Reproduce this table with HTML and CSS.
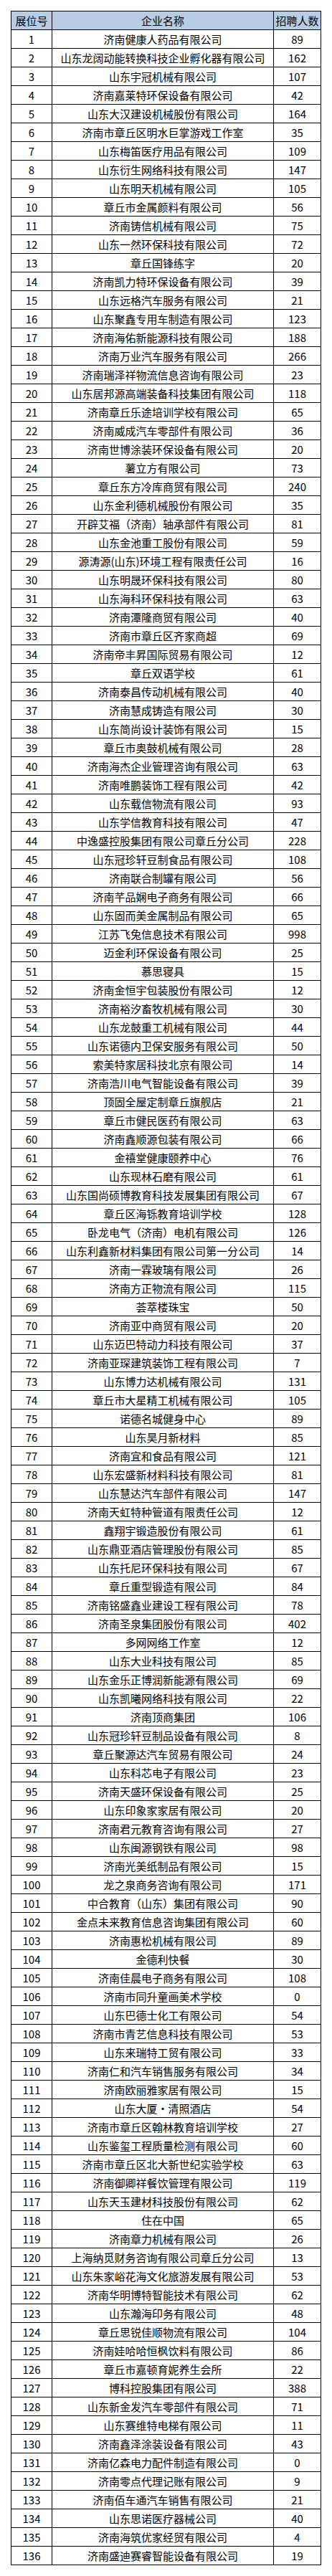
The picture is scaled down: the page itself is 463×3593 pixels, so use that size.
FILE: index.html
```html
<!DOCTYPE html>
<html lang="zh-CN">
<head>
<meta charset="utf-8">
<title>招聘企业名单</title>
<link rel="stylesheet" href="styles.css">
</head>
<body>
<div class="page">
<table class="list">
<colgroup><col class="c-no"><col class="c-name"><col class="c-num"></colgroup>
<thead>
<tr><th>展位号</th><th>企业名称</th><th>招聘人数</th></tr>
</thead>
<tbody>
<tr><td>1</td><td>济南健康人药品有限公司</td><td>89</td></tr>
<tr><td>2</td><td>山东龙阔动能转换科技企业孵化器有限公司</td><td>162</td></tr>
<tr><td>3</td><td>山东宇冠机械有限公司</td><td>107</td></tr>
<tr><td>4</td><td>济南嘉莱特环保设备有限公司</td><td>42</td></tr>
<tr><td>5</td><td>山东大汉建设机械股份有限公司</td><td>164</td></tr>
<tr><td>6</td><td>济南市章丘区明水巨掌游戏工作室</td><td>35</td></tr>
<tr><td>7</td><td>山东梅笛医疗用品有限公司</td><td>109</td></tr>
<tr><td>8</td><td>山东衍生网络科技有限公司</td><td>147</td></tr>
<tr><td>9</td><td>山东明天机械有限公司</td><td>105</td></tr>
<tr><td>10</td><td>章丘市金属颜料有限公司</td><td>56</td></tr>
<tr><td>11</td><td>济南铸信机械有限公司</td><td>75</td></tr>
<tr><td>12</td><td>山东一然环保科技有限公司</td><td>72</td></tr>
<tr><td>13</td><td>章丘国锋练字</td><td>20</td></tr>
<tr><td>14</td><td>济南凯力特环保设备有限公司</td><td>39</td></tr>
<tr><td>15</td><td>山东远格汽车服务有限公司</td><td>21</td></tr>
<tr><td>16</td><td>山东聚鑫专用车制造有限公司</td><td>123</td></tr>
<tr><td>17</td><td>济南海佑新能源科技有限公司</td><td>188</td></tr>
<tr><td>18</td><td>济南万业汽车服务有限公司</td><td>266</td></tr>
<tr><td>19</td><td>济南瑞泽祥物流信息咨询有限公司</td><td>23</td></tr>
<tr><td>20</td><td>山东居邦源高端装备科技集团有限公司</td><td>118</td></tr>
<tr><td>21</td><td>济南章丘乐途培训学校有限公司</td><td>65</td></tr>
<tr><td>22</td><td>济南威成汽车零部件有限公司</td><td>36</td></tr>
<tr><td>23</td><td>济南世博涂装环保设备有限公司</td><td>20</td></tr>
<tr><td>24</td><td>薯立方有限公司</td><td>73</td></tr>
<tr><td>25</td><td>章丘东方冷库商贸有限公司</td><td>240</td></tr>
<tr><td>26</td><td>山东金利德机械股份有限公司</td><td>35</td></tr>
<tr><td>27</td><td>开辟艾福（济南）轴承部件有限公司</td><td>81</td></tr>
<tr><td>28</td><td>山东金池重工股份有限公司</td><td>59</td></tr>
<tr><td>29</td><td>源涛源(山东)环境工程有限责任公司</td><td>16</td></tr>
<tr><td>30</td><td>山东明晟环保科技有限公司</td><td>80</td></tr>
<tr><td>31</td><td>山东海科环保科技有限公司</td><td>63</td></tr>
<tr><td>32</td><td>济南潭隆商贸有限公司</td><td>40</td></tr>
<tr><td>33</td><td>济南市章丘区齐家商超</td><td>69</td></tr>
<tr><td>34</td><td>济南帝丰昇国际贸易有限公司</td><td>12</td></tr>
<tr><td>35</td><td>章丘双语学校</td><td>61</td></tr>
<tr><td>36</td><td>济南泰昌传动机械有限公司</td><td>40</td></tr>
<tr><td>37</td><td>济南慧成铸造有限公司</td><td>30</td></tr>
<tr><td>38</td><td>山东简尚设计装饰有限公司</td><td>15</td></tr>
<tr><td>39</td><td>章丘市奥鼓机械有限公司</td><td>28</td></tr>
<tr><td>40</td><td>济南海杰企业管理咨询有限公司</td><td>63</td></tr>
<tr><td>41</td><td>济南唯鹏装饰工程有限公司</td><td>42</td></tr>
<tr><td>42</td><td>山东载信物流有限公司</td><td>93</td></tr>
<tr><td>43</td><td>山东学信教育科技有限公司</td><td>47</td></tr>
<tr><td>44</td><td>中逸盛控股集团有限公司章丘分公司</td><td>228</td></tr>
<tr><td>45</td><td>山东冠珍轩豆制食品有限公司</td><td>108</td></tr>
<tr><td>46</td><td>济南联合制罐有限公司</td><td>56</td></tr>
<tr><td>47</td><td>济南芊品娴电子商务有限公司</td><td>66</td></tr>
<tr><td>48</td><td>山东固而美金属制品有限公司</td><td>65</td></tr>
<tr><td>49</td><td>江苏飞兔信息技术有限公司</td><td>998</td></tr>
<tr><td>50</td><td>迈金利环保设备有限公司</td><td>25</td></tr>
<tr><td>51</td><td>慕思寝具</td><td>15</td></tr>
<tr><td>52</td><td>济南金恒宇包装股份有限公司</td><td>12</td></tr>
<tr><td>53</td><td>济南裕汐畜牧机械有限公司</td><td>30</td></tr>
<tr><td>54</td><td>山东龙鼓重工机械有限公司</td><td>44</td></tr>
<tr><td>55</td><td>山东诺德内卫保安服务有限公司</td><td>50</td></tr>
<tr><td>56</td><td>索美特家居科技北京有限公司</td><td>14</td></tr>
<tr><td>57</td><td>济南浩川电气智能设备有限公司</td><td>39</td></tr>
<tr><td>58</td><td>顶固全屋定制章丘旗舰店</td><td>21</td></tr>
<tr><td>59</td><td>章丘市健民医药有限公司</td><td>63</td></tr>
<tr><td>60</td><td>济南鑫顺源包装有限公司</td><td>66</td></tr>
<tr><td>61</td><td>金禧堂健康颐养中心</td><td>76</td></tr>
<tr><td>62</td><td>山东现林石磨有限公司</td><td>61</td></tr>
<tr><td>63</td><td>山东国尚硕博教育科技发展集团有限公司</td><td>67</td></tr>
<tr><td>64</td><td>章丘区海铄教育培训学校</td><td>128</td></tr>
<tr><td>65</td><td>卧龙电气（济南）电机有限公司</td><td>126</td></tr>
<tr><td>66</td><td>山东利鑫新材料集团有限公司第一分公司</td><td>14</td></tr>
<tr><td>67</td><td>济南一霖玻璃有限公司</td><td>26</td></tr>
<tr><td>68</td><td>济南方正物流有限公司</td><td>115</td></tr>
<tr><td>69</td><td>荟萃楼珠宝</td><td>50</td></tr>
<tr><td>70</td><td>济南亚中商贸有限公司</td><td>20</td></tr>
<tr><td>71</td><td>山东迈巴特动力科技有限公司</td><td>37</td></tr>
<tr><td>72</td><td>济南亚琛建筑装饰工程有限公司</td><td>7</td></tr>
<tr><td>73</td><td>山东博力达机械有限公司</td><td>131</td></tr>
<tr><td>74</td><td>章丘市大星精工机械有限公司</td><td>105</td></tr>
<tr><td>75</td><td>诺德名城健身中心</td><td>89</td></tr>
<tr><td>76</td><td>山东昊月新材料</td><td>85</td></tr>
<tr><td>77</td><td>济南宜和食品有限公司</td><td>121</td></tr>
<tr><td>78</td><td>山东宏盛新材料科技有限公司</td><td>81</td></tr>
<tr><td>79</td><td>山东慧达汽车部件有限公司</td><td>147</td></tr>
<tr><td>80</td><td>济南天虹特种管道有限责任公司</td><td>12</td></tr>
<tr><td>81</td><td>鑫翔宇锻造股份有限公司</td><td>61</td></tr>
<tr><td>82</td><td>山东鼎亚酒店管理股份有限公司</td><td>85</td></tr>
<tr><td>83</td><td>山东托尼环保科技有限公司</td><td>67</td></tr>
<tr><td>84</td><td>章丘重型锻造有限公司</td><td>84</td></tr>
<tr><td>85</td><td>济南铭盛鑫业建设工程有限公司</td><td>78</td></tr>
<tr><td>86</td><td>济南圣泉集团股份有限公司</td><td>402</td></tr>
<tr><td>87</td><td>多网网络工作室</td><td>12</td></tr>
<tr><td>88</td><td>山东大业科技有限公司</td><td>85</td></tr>
<tr><td>89</td><td>山东金乐正博润新能源有限公司</td><td>69</td></tr>
<tr><td>90</td><td>山东凯曦网络科技有限公司</td><td>22</td></tr>
<tr><td>91</td><td>济南顶商集团</td><td>106</td></tr>
<tr><td>92</td><td>山东冠珍轩豆制品设备有限公司</td><td>8</td></tr>
<tr><td>93</td><td>章丘聚源达汽车贸易有限公司</td><td>24</td></tr>
<tr><td>94</td><td>山东科芯电子有限公司</td><td>23</td></tr>
<tr><td>95</td><td>济南天盛环保设备有限公司</td><td>25</td></tr>
<tr><td>96</td><td>山东印象家家居有限公司</td><td>20</td></tr>
<tr><td>97</td><td>济南君元教育咨询有限公司</td><td>27</td></tr>
<tr><td>98</td><td>山东闽源钢铁有限公司</td><td>98</td></tr>
<tr><td>99</td><td>济南光美纸制品有限公司</td><td>15</td></tr>
<tr><td>100</td><td>龙之泉商务咨询有限公司</td><td>171</td></tr>
<tr><td>101</td><td>中合教育（山东）集团有限公司</td><td>90</td></tr>
<tr><td>102</td><td>金点未来教育信息咨询集团有限公司</td><td>60</td></tr>
<tr><td>103</td><td>济南惠松机械有限公司</td><td>89</td></tr>
<tr><td>104</td><td>金德利快餐</td><td>30</td></tr>
<tr><td>105</td><td>济南佳晨电子商务有限公司</td><td>108</td></tr>
<tr><td>106</td><td>济南市同升童画美术学校</td><td>0</td></tr>
<tr><td>107</td><td>山东巴德士化工有限公司</td><td>54</td></tr>
<tr><td>108</td><td>济南市青艺信息科技有限公司</td><td>53</td></tr>
<tr><td>109</td><td>山东来瑞特工贸有限公司</td><td>33</td></tr>
<tr><td>110</td><td>济南仁和汽车销售服务有限公司</td><td>34</td></tr>
<tr><td>111</td><td>济南欧丽雅家居有限公司</td><td>15</td></tr>
<tr><td>112</td><td>山东大厦·清照酒店</td><td>54</td></tr>
<tr><td>113</td><td>济南市章丘区翰林教育培训学校</td><td>27</td></tr>
<tr><td>114</td><td>山东鉴玺工程质量检测有限公司</td><td>60</td></tr>
<tr><td>115</td><td>济南市章丘区北大新世纪实验学校</td><td>63</td></tr>
<tr><td>116</td><td>济南御卿祥餐饮管理有限公司</td><td>119</td></tr>
<tr><td>117</td><td>山东天玉建材科技股份有限公司</td><td>62</td></tr>
<tr><td>118</td><td>住在中国</td><td>65</td></tr>
<tr><td>119</td><td>济南章力机械有限公司</td><td>26</td></tr>
<tr><td>120</td><td>上海纳觅财务咨询有限公司章丘分公司</td><td>13</td></tr>
<tr><td>121</td><td>山东朱家峪花海文化旅游发展有限公司</td><td>53</td></tr>
<tr><td>122</td><td>济南华明博特智能技术有限公司</td><td>62</td></tr>
<tr><td>123</td><td>山东瀚海印务有限公司</td><td>48</td></tr>
<tr><td>124</td><td>章丘思锐佳顺物流有限公司</td><td>104</td></tr>
<tr><td>125</td><td>济南娃哈哈恒枫饮料有限公司</td><td>86</td></tr>
<tr><td>126</td><td>章丘市嘉顿育妮养生会所</td><td>22</td></tr>
<tr><td>127</td><td>博科控股集团有限公司</td><td>388</td></tr>
<tr><td>128</td><td>山东新金发汽车零部件有限公司</td><td>71</td></tr>
<tr><td>129</td><td>山东赛维特电梯有限公司</td><td>11</td></tr>
<tr><td>130</td><td>济南鑫泽涂装设备有限公司</td><td>43</td></tr>
<tr><td>131</td><td>济南亿森电力配件制造有限公司</td><td>0</td></tr>
<tr><td>132</td><td>济南零点代理记账有限公司</td><td>9</td></tr>
<tr><td>133</td><td>济南佰车通汽车销售有限公司</td><td>21</td></tr>
<tr><td>134</td><td>山东思诺医疗器械公司</td><td>40</td></tr>
<tr><td>135</td><td>济南海筑优家经贸有限公司</td><td>4</td></tr>
<tr><td>136</td><td>济南盛迪赛睿智能设备有限公司</td><td>19</td></tr>
</tbody>
</table>
</div>
</body>
</html>
```
FILE: styles.css
```css
html, body {
  margin: 0;
  padding: 0;
  background: #ffffff;
}

.page {
  padding: 15px;
}

.list {
  table-layout: fixed;
  width: 433px;
  border-collapse: separate;
  border-spacing: 0;
  border-left: 1px solid #000;
  border-top: 1px solid #000;
  font-family: "Noto Sans CJK SC", "Microsoft YaHei", sans-serif;
  font-size: 15px;
  color: #000;
}

.c-no { width: 57px; }
.c-name { width: 309px; }
.c-num { width: 66px; }

.list tr {
  height: 26px;
}

.list th,
.list td {
  padding: 0;
  border-right: 1px solid #000;
  border-bottom: 1px solid #000;
  text-align: center;
  vertical-align: middle;
  line-height: 25px;
  font-weight: normal;
  white-space: nowrap;
  overflow: hidden;
}

.list th {
  background: #b8cce4;
}
```
